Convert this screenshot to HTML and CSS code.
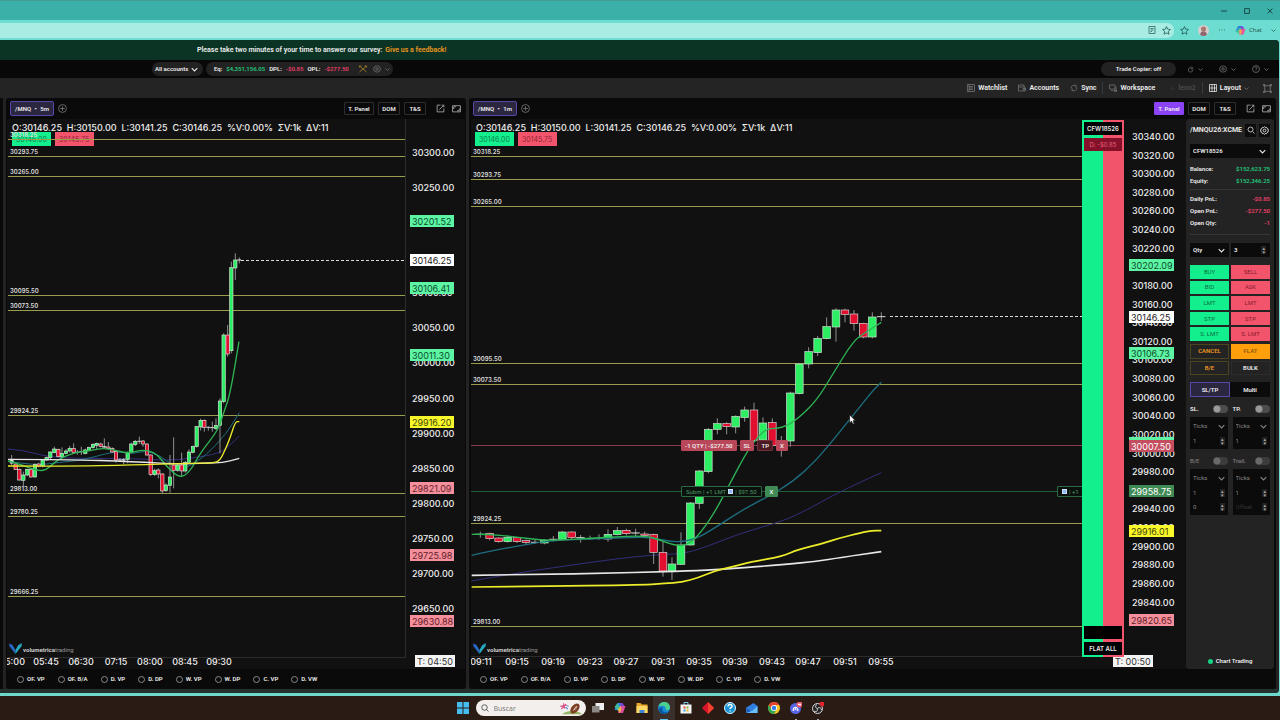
FILE: index.html
```html
<!DOCTYPE html>
<html lang="en">
<head>
<meta charset="utf-8">
<title>Volumetrica Trading</title>
<link rel="stylesheet" href="styles.css">
</head>
<body>
<svg class="defs" aria-hidden="true">
  <symbol id="chev" viewBox="0 0 10 10"><path d="M1 3l4 4 4-4"/></symbol>
  <symbol id="gear" viewBox="0 0 16 16"><path d="M8 1l1.5 1.7 2.2-.4.8 2.1 2.1.9-.4 2.2L15 8l-.8.5.4 2.2-2.1.9-.8 2.1-2.2-.4L8 15l-1.5-1.7-2.2.4-.8-2.1-2.1-.9.4-2.2L1 8l.8-.5-.4-2.2 2.1-.9.8-2.1 2.2.4z"/><circle cx="8" cy="8" r="2.5"/></symbol>
  <symbol id="plus" viewBox="0 0 16 16"><circle cx="8" cy="8" r="7"/><path d="M8 4v8M4 8h8"/></symbol>
  <symbol id="popout" viewBox="0 0 16 16"><path d="M8 2H2v12h12V8M6 10l8-8M10 2h4v4"/></symbol>
  <symbol id="full" viewBox="0 0 16 16"><path d="M1 3h14v11H1zM3 9V5h4M13 8v4H9"/></symbol>
  <symbol id="star" viewBox="0 0 16 16"><path d="M8 1l2.1 4.6 4.9.6-3.6 3.4.9 5L8 12.200l-4.300 2.400.9-5L1 6.200l4.900-.6z"/></symbol>
  <symbol id="logo" viewBox="0 0 24 20"><path d="M0 1l6 2 6 10v7L1 6z" fill="#2869c8" stroke="none"/><path d="M24 0l-7 4-5 9v7L23 6z" fill="#27a9c0" stroke="none"/></symbol>
</svg>

<header class="titlebar">
  <button class="win" aria-label="Minimize"><svg class="i6" viewBox="0 0 10 10"><path d="M0 5h10"/></svg></button>
  <button class="win" aria-label="Maximize"><svg class="i6" viewBox="0 0 10 10"><path d="M1 1h8v8H1z"/></svg></button>
  <button class="win" aria-label="Close"><svg class="i6" viewBox="0 0 10 10"><path d="M1 1l8 8M9 1l-8 8"/></svg></button>
</header>
<div class="toolbar">
  <div class="address">
    <svg class="i8" viewBox="0 0 16 16"><path d="M2 1h12v14H2zM5 5h6M5 8h6M5 11h3"/></svg>
    <svg class="i9"><use href="#star"/></svg>
  </div>
  <svg class="i9"><use href="#star"/></svg>
  <svg class="i11 plain" viewBox="0 0 22 22"><circle cx="11" cy="11" r="11" fill="#d7cfcd"/><circle cx="11" cy="8" r="5" fill="#a8776e"/><path d="M4 19c1-9 13-9 14 0-4 4-10 4-14 0z" fill="#8e6871"/></svg>
  <svg class="i8" viewBox="0 0 16 16"><path d="M2 8h2M7 8h2M12 8h2"/></svg>
  <span class="chatgroup">
    <svg class="i11 plain" viewBox="0 0 22 22"><path d="M6 2h8l-4 11H1z" fill="#2a83e0"/><path d="M14 2l3 6h-6l-4 9-6-4z" fill="#41c3a0"/><path d="M11 8h10l-4 11H8z" fill="#e3569b"/><path d="M8 11l4-3 2 6-4 6z" fill="#f5a34a"/><path d="M14 2l5 5-6 1-3-5z" fill="#7440d8"/></svg>
    <span>Chat</span>
  </span>
  <svg class="i5"><use href="#chev"/></svg>
</div>

<main class="app">
  <div class="banner"><span>Please take two minutes of your time to answer our survey:</span><a href="#">Give us a feedback!</a></div>

  <div class="statusbar">
    <button class="pill all">All accounts <svg class="i7"><use href="#chev"/></svg></button>
    <div class="pill stats">
      <span>Eq:</span><span class="up">$4,351,156.05</span>
      <span>DPL:</span><span class="down">-$0.85</span>
      <span>OPL:</span><span class="down">-$277.50</span>
      <svg class="i8 gold" viewBox="0 0 16 16"><path d="M1 2l14 12M15 2L1 14M11 2h4v3M5 2H1v3"/></svg>
      <svg class="i8 dim"><use href="#gear"/></svg>
      <svg class="i5 dim"><use href="#chev"/></svg>
    </div>
    <div class="right">
      <button class="pill copier">Trade Copier: off</button>
      <svg class="i7 dim" viewBox="0 0 16 16"><path d="M8 4a5 5 0 1 0 5 5M9 1v4M13 2l-3 5M15 6l-5 2"/></svg><svg class="i5 dim"><use href="#chev"/></svg>
      <svg class="i8 dim far"><use href="#gear"/></svg><svg class="i5 dim"><use href="#chev"/></svg>
      <svg class="i8 dim far" viewBox="0 0 16 16"><circle cx="8" cy="8" r="7"/><path d="M6 6c0-3 4-3 4 0 0 2-2 1-2 3M8 11v1"/></svg><svg class="i5 dim"><use href="#chev"/></svg>
    </div>
  </div>

  <nav class="menubar">
    <button><svg class="i8 dim" viewBox="0 0 16 16"><path d="M1 1h14v14H1zM4 5h8M4 8h8M4 11h8M4 1v14"/></svg>Watchlist</button>
    <button><svg class="i8 dim" viewBox="0 0 16 16"><path d="M1 2h11v4M1 2v12h13V6H1M10 9h5v3h-5z"/></svg>Accounts</button>
    <button><svg class="i8 dim" viewBox="0 0 16 16"><path d="M2 9a6 6 0 0 1 10-5M14 7a6 6 0 0 1-10 5M10 2l3 2-2 3M6 14l-3-2 2-3"/></svg>Sync</button>
    <i class="sep"></i>
    <button><svg class="i8 dim" viewBox="0 0 16 16"><path d="M1 2h11v8H1zM4 13h5M14 5v9M11 12h4v3h-4z"/></svg>Workspace</button>
    <button class="ghost"><svg class="i5" viewBox="0 0 10 10"><path d="M1 5h2M5 1v2M7 5h2M5 7v2"/></svg>leon2</button>
    <i class="sep"></i>
    <button><svg class="i8" viewBox="0 0 16 16"><path d="M1 1h14v14H1zM6 1v14M11 1v14M1 8h14"/></svg>Layout <svg class="i5 dim"><use href="#chev"/></svg></button>
    <button class="fs" aria-label="Full screen"><svg class="i9 dim" viewBox="0 0 16 16"><path d="M3 3h10v10H3zM1 1l3 3M15 1l-3 3M1 15l3-3M15 15l-3-3M1 4V1h3M12 1h3v3M1 12v3h3M12 15h3v-3"/></svg></button>
  </nav>

  <div class="workspace">
    <div class="stub"></div>

    <section class="panel left">
      <div class="tabs">
        <button class="tab">/MNQ <b>•</b> 5m</button>
        <button class="add" aria-label="Add tab"><svg class="i9"><use href="#plus"/></svg></button>
        <div class="tools"><button class="wide">T. Panel</button><button>DOM</button><button>T&amp;S</button>
          <svg class="i9"><use href="#popout"/></svg><svg class="i9 last"><use href="#full"/></svg></div>
      </div>
      <div class="body">
        <div class="chart">
          <svg id="chart5" class="plot" viewBox="7 119 458 550" role="img" aria-label="5 minute chart"></svg>
        </div>
      </div>
      <div class="studies"></div>
    </section>

    <section class="panel main">
      <div class="tabs">
        <button class="tab">/MNQ <b>•</b> 1m</button>
        <button class="add" aria-label="Add tab"><svg class="i9"><use href="#plus"/></svg></button>
        <div class="tools"><button class="wide on">T. Panel</button><button>DOM</button><button>T&amp;S</button>
          <svg class="i9"><use href="#popout"/></svg><svg class="i9 last"><use href="#full"/></svg></div>
      </div>
      <div class="body">
        <div class="chart">
          <svg id="chart1" class="plot" viewBox="471 119 715 550" role="img" aria-label="1 minute chart"></svg>
          <div class="order position"><span class="tag">-1 QTY | -$277.50</span><button>SL</button><button class="tp">TP</button><button>X</button></div>
          <div class="order limit"><span class="tag">Subm | +1 LMT <i class="sq"></i> | $97.50</span><button>X</button></div>
          <div class="order edge"><span class="tag"><i class="sq"></i> | +1</span></div>
          <div class="ladder">
            <span class="acct">CFW18526</span><span class="day">D: -$0.85</span>
            <span class="blank"></span><button>FLAT ALL</button>
          </div>
          <svg class="cursor" viewBox="0 0 12 18"><path d="M1 1v14l3-3 3 5 2-1-2-5h4z" fill="#fff" stroke="#222"/></svg>
        </div>

        <aside class="trade">
          <div class="symbol"><strong>/MNQU26:XCME</strong>
            <button aria-label="Search"><svg class="i8" viewBox="0 0 16 16"><circle cx="7" cy="7" r="5"/><path d="M11 11l4 4"/></svg></button>
            <button aria-label="Settings"><svg class="i9"><use href="#gear"/></svg></button></div>
          <div class="pick account"><select aria-label="Account"><option>CFW18526</option></select><svg class="i7"><use href="#chev"/></svg></div>
          <dl><dt>Balance:</dt><dd class="up">$152,623.75</dd><dt>Equity:</dt><dd class="up">$152,346.25</dd></dl>
          <dl class="pnl"><dt>Daily PnL:</dt><dd class="down">-$0.85</dd><dt>Open PnL:</dt><dd class="down">-$277.50</dd><dt>Open Qty:</dt><dd class="down">-1</dd></dl>
          <div class="qty">
            <div class="pick"><select aria-label="Quantity type"><option>Qty</option></select><svg class="i7"><use href="#chev"/></svg></div>
            <div class="pick"><input type="text" value="3" aria-label="Quantity"><i class="spin">▴<br>▾</i></div>
          </div>
          <div class="grid">
            <button class="buy">BUY</button><button class="sell">SELL</button>
            <button class="buy">BID</button><button class="sell">ASK</button>
            <button class="buy">LMT</button><button class="sell">LMT</button>
            <button class="buy">STP</button><button class="sell">STP</button>
            <button class="buy">S. LMT</button><button class="sell">S. LMT</button>
          </div>
          <div class="grid acts">
            <button class="cancel">CANCEL</button><button class="flat">FLAT</button>
            <button class="cancel">B/E</button><button class="bulk">BULK</button>
          </div>
          <div class="grid modes"><button class="sel">SL/TP</button><button>Multi</button></div>
          <div class="brackets">
            <label>SL.<input type="checkbox"></label><label>TP.<input type="checkbox"></label>
            <div class="box"><div class="pick"><select aria-label="SL unit"><option>Ticks</option></select><svg class="i7"><use href="#chev"/></svg></div><div class="pick"><input type="text" value="1" aria-label="SL value"><i class="spin">▴<br>▾</i></div></div>
            <div class="box"><div class="pick"><select aria-label="TP unit"><option>Ticks</option></select><svg class="i7"><use href="#chev"/></svg></div><div class="pick"><input type="text" value="1" aria-label="TP value"><i class="spin">▴<br>▾</i></div></div>
          </div>
          <div class="brackets off">
            <label>B/E<input type="checkbox"></label><label>Trail.<input type="checkbox"></label>
            <div class="box"><div class="pick"><select aria-label="B/E unit"><option>Ticks</option></select><svg class="i7"><use href="#chev"/></svg></div><div class="pick"><input type="text" value="1" aria-label="B/E value"><i class="spin">▴<br>▾</i></div><div class="pick"><input type="text" value="0" aria-label="B/E offset"><i class="spin">▴<br>▾</i></div></div>
            <div class="box"><div class="pick"><select aria-label="Trail unit"><option>Ticks</option></select><svg class="i7"><use href="#chev"/></svg></div><div class="pick"><input type="text" value="1" aria-label="Trail value"><i class="spin">▴<br>▾</i></div><div class="pick"><input type="text" placeholder="Offset" aria-label="Trail offset"><i class="spin">▴<br>▾</i></div></div>
          </div>
          <div class="status"><i></i>Chart Trading</div>
        </aside>
      </div>
      <div class="studies"></div>
    </section>
  </div>
  <div class="rim"></div>
</main>

<footer class="taskbar">
  <button class="app-icon" aria-label="Start"><svg viewBox="0 0 24 24"><path d="M0 0h11v11H0zM13 0h11v11H13zM0 13h11v11H0zM13 13h11v11H13z" fill="#45bdf0"/></svg></button>
  <label class="search"><svg class="i8" viewBox="0 0 16 16"><circle cx="7" cy="7" r="5.500"/><path d="M11 11l4 4"/></svg><input type="text" placeholder="Buscar" aria-label="Buscar">
    <svg class="ball" viewBox="0 0 66 36"><path d="M8 34c14-12 44-12 56 0z" fill="#93b565"/><path d="M12 4l4 14M3 12l18-3M6 20l13-14" stroke="#d84c87" stroke-width="3"/><path d="M18 14l6 6M22 10l4 2" stroke="#3b7bd8" stroke-width="3"/><ellipse cx="44" cy="18" rx="16" ry="10" transform="rotate(-50 44 18)" fill="#7d3f24"/><path d="M39 24l11-13M41 18l4 3M45 14l4 3" stroke="#fff" stroke-width="2"/></svg></label>
  <button class="app-icon" aria-label="Task view"><svg viewBox="0 0 24 24"><path d="M7 2h17v14H7z" fill="#eee"/><path d="M0 8h15v13H0z" fill="#8b8886"/></svg></button>
  <button class="app-icon" aria-label="Copilot"><svg viewBox="0 0 24 24"><path d="M7 2h9l-5 14H1z" fill="#2d85e6"/><path d="M1 10l6-8 5 8-3 9z" fill="#43b8a0"/><path d="M12 8h11l-5 14H8z" fill="#df4f9f"/><path d="M8 15l5-7 2 7-4 7z" fill="#f6b443"/><path d="M12 2h5l4 6h-7z" fill="#7544d7"/></svg></button>
  <button class="app-icon" aria-label="Files"><svg viewBox="0 0 24 24"><path d="M1 2h8l3 3h11v17H1z" fill="#e8a92b"/><path d="M1 8h22v14H1z" fill="#ffd766"/><path d="M7 16h10v6H7z" fill="#3a86d2"/></svg></button>
  <button class="app-icon active" aria-label="Edge"><svg viewBox="0 0 24 24"><circle cx="12" cy="12" r="12" fill="#1688d4"/><path d="M1 9C4-3 23-3 24 11c0 6-7 6-9 4 3-5-4-10-14-6z" fill="#4bd08d"/><path d="M10 11c-5 5 0 12 10 9-8 8-21 1-17-8z" fill="#0c519e"/></svg></button>
  <button class="app-icon" aria-label="Store"><svg viewBox="0 0 24 24"><path d="M8 6V1h8v5" fill="none" stroke="#7cc4f0" stroke-width="2"/><path d="M1 5h22v18H1z" fill="#f4f4f4"/><path d="M7 9h4v4H7z" fill="#e5502c"/><path d="M13 9h4v4h-4z" fill="#7db738"/><path d="M7 15h4v4H7z" fill="#2a9ee4"/><path d="M13 15h4v4h-4z" fill="#f2b51d"/></svg></button>
  <button class="app-icon" aria-label="Anydesk"><svg viewBox="0 0 24 24"><path d="M12 0l12 12-12 12L0 12z" fill="#d9152a"/><path d="M12 0l12 12-12 12z" fill="#f0422d"/></svg></button>
  <button class="app-icon" aria-label="Help"><svg viewBox="0 0 24 24"><circle cx="12" cy="12" r="11" fill="#1893d6" stroke="#dff3ff" stroke-width="2"/><path d="M8 9c0-6 9-5 8 0-1 3-4 2-4 5M12 17v2" fill="none" stroke="#fff" stroke-width="3"/></svg></button>
  <button class="app-icon" aria-label="Mail"><svg viewBox="0 0 24 24"><path d="M1 11L15 2l8 6v14H1z" fill="#2e7fe0"/><path d="M1 11l11 7 11-10v14H1z" fill="#67bff5"/><path d="M1 11l10 7L1 22z" fill="#1a5dc0"/></svg></button>
  <button class="app-icon" aria-label="Chrome"><svg viewBox="0 0 24 24"><circle cx="12" cy="12" r="12" fill="#f8c822"/><path d="M1.600 6a12 12 0 0 1 20.800 0H12l-5 9z" fill="#e6402f"/><path d="M1.600 6A12 12 0 0 0 12 24l5-9H7z" fill="#34a551"/><circle cx="12" cy="12" r="6" fill="#fff"/><circle cx="12" cy="12" r="4.500" fill="#397de8"/></svg></button>
  <button class="app-icon run" aria-label="Discord"><svg viewBox="0 0 24 24"><circle cx="11" cy="13" r="11" fill="#5766e8"/><path d="M5 17c0-10 12-10 12 0l-3 1-1-2H9l-1 2z" fill="#fff"/><circle cx="9" cy="14" r="1.500" fill="#5766e8"/><circle cx="13" cy="14" r="1.500" fill="#5766e8"/><circle cx="19" cy="5" r="6" fill="#e85a6a"/><path d="M16 5h6" stroke="#fff" stroke-width="3"/></svg></button>
  <button class="app-icon run" aria-label="OBS"><svg viewBox="0 0 24 24"><circle cx="11" cy="13" r="10" fill="#262427" stroke="#ddd" stroke-width="2"/><path d="M11 13c-5-1-5-6-1-8M11 13c3-4 8-1 8 3M11 13c1 5-3 8-7 5" fill="none" stroke="#ddd" stroke-width="2"/><circle cx="20" cy="4" r="5" fill="#e5222b"/></svg></button>
</footer>
<script src="chart.js"></script>
</body>
</html>
```
FILE: styles.css
```css
* { box-sizing: border-box; }
body { margin: 0; min-height: 100vh; display: flex; flex-direction: column; background: #6cd9cc; color: #eee; font: 600 6px/8px Roboto, sans-serif; }
button, input, select { font: inherit; color: inherit; margin: 0; padding: 0; border: 0; background: none; border-radius: 0; white-space: nowrap; }
select { appearance: none; width: 100%; }
input[type=text] { width: 100%; min-width: 0; outline: 0; }
svg { fill: none; stroke: currentColor; stroke-width: 1.500; flex: none; display: block; }
.plain { stroke: none; }
.defs { display: none; }
.i5 { width: 5px; height: 5px; }
.i6 { width: 6px; height: 6px; }
.i7 { width: 7px; height: 7px; }
.i8 { width: 8px; height: 8px; }
.i9 { width: 9px; height: 9px; }
.i11 { width: 11px; height: 11px; }
.dim { color: #777; }
.up { color: #24c77c; }
.down { color: #ea3f68; }

.titlebar { height: 20px; flex: none; display: flex; justify-content: flex-end; align-items: center; gap: 17px; padding-right: 7px; background: #3bb0a8; border-top: 1px solid #459b91; color: #143f3c; }
.toolbar { height: 20px; flex: none; display: flex; align-items: center; gap: 9px; padding-right: 4px; background: #6cddd0; color: #265d58; }
.address { flex: 1; height: 15px; display: flex; justify-content: flex-end; align-items: center; gap: 6px; padding-right: 3px; margin-right: -3px; border-radius: 0 7px 7px 0; background: #a9ece4; }
.chatgroup { display: flex; align-items: center; gap: 3px; font: 400 6px/9px "Open Sans", sans-serif; color: #204a47; }

.app { flex: 1; display: flex; flex-direction: column; margin-right: 1px; background: #232323; border-radius: 0 4px 4px 0; overflow: hidden; }
.banner { height: 20px; display: flex; align-items: center; gap: 3px; padding-left: 197px; font-size: 7px; background: #0c3425; }
.banner a { color: #ef9a20; text-decoration: none; }
.statusbar { height: 18px; display: flex; align-items: center; gap: 3px; padding: 0 10px 0 152px; background: #080808; }
.pill { height: 14px; display: flex; align-items: center; border-radius: 7px; background: #222; }
.all { width: 51px; justify-content: space-between; padding: 0 5px 0 3px; }
.stats { width: 187px; gap: 4px; padding: 0 10px 0 8px; }
.gold { color: #b8892c; margin: 0 2px 0 6px; }
.statusbar .right { margin-left: auto; display: flex; align-items: center; gap: 4px; }
.copier { width: 75px; justify-content: center; margin-right: 7px; }
.far { margin-left: 12px; }
.menubar { height: 20px; display: flex; justify-content: flex-end; align-items: center; gap: 11px; padding-right: 7px; font-size: 7px; background: #242424; }
.menubar button { display: flex; align-items: center; gap: 3px; }
.sep { width: 1px; height: 12px; margin: 0 -5px; background: #3a3a3a; }
.ghost { color: #4c4c4c; margin-left: 4px; }
.fs { margin-left: 3px; }

.workspace { flex: 1; display: flex; padding: 0 3px 0 0; gap: 3px; }
.stub { width: 3px; background: #0a0a0a; }
.panel { display: flex; flex-direction: column; background: #0a0a0a; border-radius: 3px; min-width: 0; }
.left { flex: 460 1 0; }
.main { flex: 807 1 0; }
.tabs { height: 21px; display: flex; align-items: center; padding: 0 5px 0 4px; gap: 4px; }
.tab { width: 44px; height: 15px; border: 1px solid #5a46a8; border-radius: 2px; background: #2b2740; }
.tab b { margin: 0 2px; }
.add { color: #777; }
.tools { margin-left: auto; display: flex; align-items: center; gap: 4px; }
.tools button { width: 22px; height: 13px; border: 1px solid #2d2d2d; border-radius: 1px; }
.tools .wide { width: 30px; }
.tools .on { background: #8b43f5; border-color: #8b43f5; }
.tools svg { color: #aaa; margin-left: 6px; }
.tools .last { margin-left: 3px; }
.body { flex: 1; display: flex; padding: 0 1px; }
.main .body { padding: 0 2px; }
.chart { flex: 1; position: relative; min-width: 0; background: #111; }
.plot { width: 100%; height: auto; stroke: none; font-family: Inter, sans-serif; }
.plot text, .plot tspan { dominant-baseline: central; }
.plot .tick { font-size: 9px; font-weight: 500; fill: #eee; }
.plot .mark { font-size: 9px; font-weight: 400; }
.plot .small { font-size: 7px; font-weight: 400; }
.plot .level { font-size: 6px; font-weight: 600; fill: #ddd; }
.plot .brand { font-family: Roboto, sans-serif; font-size: 6px; font-weight: 700; fill: #ccc; }
.plot .brand tspan { font-weight: 400; fill: #999; }
.studies { height: 20px; display: flex; align-items: center; gap: 13px; padding-left: 11px; }
.studies label { display: flex; align-items: center; gap: 3px; }
.studies input { appearance: none; width: 7px; height: 7px; border: 1px solid #888; border-radius: 50%; }

.order { position: absolute; left: 210px; display: flex; gap: 3px; }
.order .tag, .order button { height: 11px; padding: 0 3px; line-height: 9px; border: 1px solid #b8475a; background: #b8475a; border-radius: 1px; }
.order .tag { display: flex; align-items: center; gap: 2px; white-space: nowrap; }
.position { top: 321px; }
.position .tp { background: #4c1a22; border-color: #70303b; }
.limit { top: 367px; }
.limit .tag, .edge .tag { padding: 0 4px; font-weight: 400; background: #0b120e; border-color: #2c6a41; color: #4d9865; }
.limit button { background: #3f8a55; border-color: #3f8a55; padding: 0 4px; }
.edge { top: 367px; left: 586px; width: 25px; }
.edge .tag { flex: 1; }
.sq { width: 5px; height: 5px; background: #8fb7f5; border: 1px solid #cfe0fb; }
.ladder { position: absolute; left: 611px; top: 1px; width: 42px; height: 537px; display: flex; flex-direction: column; gap: 3px; padding: 2px; background: linear-gradient(90deg, #14ef8d 50%, #f2556b 50%); }
.ladder > * { height: 13px; flex: none; display: flex; align-items: center; justify-content: center; background: #000; font-family: Inter, sans-serif; }
.ladder .day { background: #85102a; color: #e5677c; font-weight: 400; }
.ladder .blank { margin-top: auto; }
.cursor { position: absolute; left: 378px; top: 295px; width: 7px; height: 11px; }

.trade { width: 88px; flex: none; display: flex; flex-direction: column; padding: 4px; border-radius: 3px; background: #232323; }
.symbol { height: 14px; display: flex; align-items: center; gap: 3px; font-size: 7px; }
.symbol strong { flex: 1; font-weight: 600; white-space: nowrap; }
.symbol button { width: 13px; height: 13px; display: grid; place-items: center; background: #0c0c0c; }
.pick { display: flex; align-items: center; height: 14px; padding: 0 4px 0 3px; background: #0b0b0b; }
.account { margin: 7px 0 5px; }
dl { display: grid; grid-template-columns: auto auto; grid-auto-rows: 12px; align-items: center; margin: 0; height: 27px; border-bottom: 1px solid #353535; }
dd { margin: 0; text-align: right; }
.pnl { height: 45px; padding-top: 3px; }
.qty { display: grid; grid-template-columns: 1fr 1fr; gap: 2px; margin: 8px 0; }
.spin { flex: none; font: 400 5px/4px "DejaVu Sans", sans-serif; color: #aaa; background: #222; padding: 0 1px; }
.grid { display: grid; grid-template-columns: 1fr 1fr; grid-auto-rows: 1fr; gap: 2px; height: 76px; }
.buy { background: #14ef8d; color: #0b6a42; font-weight: 400; }
.sell { background: #f2556b; color: #8a1b2d; font-weight: 400; }
.acts { height: 31px; margin: 3px 0 7px; }
.cancel { border: 1px solid #4d431c; color: #ef9a20; }
.flat { background: #ff9f0c; color: #8b5a10; }
.bulk { border: 1px solid #2c2c2c; }
.modes { height: 15px; gap: 0; }
.modes button { background: #0b0b0b; }
.modes .sel { border: 1px solid #5a46a8; background: #2b2740; }
.brackets { display: grid; grid-template-columns: 1fr 1fr; gap: 4px 5px; margin-top: 7px; }
.brackets label { height: 9px; display: flex; align-items: center; justify-content: space-between; }
.brackets input[type=checkbox] { appearance: none; width: 15px; height: 8px; border-radius: 4px; background: radial-gradient(circle at 4px 4px, #999 3px, #4c4c4c 4px); }
.box { background: #0b0b0b; padding: 1px 0; color: #888; font-weight: 400; }
.box .pick { height: 16px; padding: 0 3px; background: none; }
.box .pick + .pick { height: 14px; }
.off label { color: #777; }
.off input[type=checkbox] { opacity: .6; }
.box ::placeholder { color: #333; opacity: 1; }
.status { margin-top: auto; display: flex; align-items: center; justify-content: center; gap: 3px; }
.status i { width: 5px; height: 5px; border-radius: 50%; background: #14d484; }
.rim { height: 4px; background: #23302d; }

.taskbar { height: 24px; margin-top: 3px; flex: none; display: flex; justify-content: center; align-items: center; background: #2b1b15; }
.app-icon { width: 22px; height: 24px; position: relative; display: grid; place-items: center; }
.app-icon svg { width: 12px; height: 12px; stroke: none; }
.active { background: #3a2f2b; }
.active::after, .run::after { content: ""; position: absolute; bottom: 0; left: 7px; width: 8px; height: 1px; background: #62c2f2; }
.run::after { left: 10px; width: 2px; background: #aaa; }
.search { width: 110px; height: 16px; display: flex; align-items: center; gap: 5px; padding: 0 3px 0 5px; margin: 0 1px 0 2px; border-radius: 8px; background: #f3efec; color: #333; font: 400 7px/9px "Open Sans", sans-serif; }
.search input { flex: 1; }
.ball { width: 24px; height: 13px; stroke: none; }
```
FILE: chart.js
```javascript
const UP = '#2bee62', DOWN = '#e20f31';

// Candles: [centre x, wick top, body top, body bottom, wick bottom, kind], in thirds of a unit
const five = { ox: 0, oy: 400, w: 10, rows: [
  [35,165,180,190,195,'d'],[47,190,192,208,210,'r'],[58,206,208,240,242,'r'],[70,215,225,241,262,'g'],[82,206,208,225,228,'g'],
  [93,207,208,231,233,'r'],[105,190,193,231,233,'g'],[116,188,192,198,202,'r'],[128,178,180,198,202,'g'],[140,170,173,180,183,'g'],
  [151,154,156,173,178,'g'],[163,140,147,158,160,'g'],[175,146,148,170,172,'r'],[186,142,160,171,174,'g'],[198,148,153,160,163,'g'],
  [209,138,145,153,158,'g'],[221,130,146,157,160,'r'],[232,150,156,158,164,'d'],[244,140,154,156,165,'d'],[256,146,150,160,163,'g'],
  [267,140,143,151,154,'g'],[279,130,133,143,146,'g'],[290,128,130,136,150,'g'],[302,128,132,139,142,'r'],[313,115,139,142,145,'d'],
  [325,126,141,146,150,'r'],[337,142,146,156,158,'r'],[348,150,155,180,188,'r'],[360,174,179,181,186,'d'],[371,174,178,181,193,'d'],
  [383,155,158,178,190,'g'],[394,128,132,158,160,'g'],[406,120,124,134,138,'g'],[418,110,123,125,132,'d'],[429,120,123,132,140,'r'],
  [441,130,132,165,167,'r'],[452,163,165,224,228,'r'],[464,206,212,224,228,'g'],[475,205,210,222,235,'r'],[487,220,222,273,280,'r'],
  [498,250,255,272,276,'g'],[510,165,231,256,278,'g'],[521,112,195,211,265,'r'],[533,190,195,211,215,'g'],[545,158,195,213,230,'r'],
  [556,183,187,213,218,'g'],[567,148,156,187,190,'g'],[579,137,139,157,160,'g'],[590,78,80,139,143,'g'],[602,56,61,81,92,'g'],
  [613,58,61,82,95,'r'],[625,79,81,83,92,'d'],[637,65,82,84,95,'d'],[648,55,76,86,90,'g'],[660,-5,3,76,160,'g'],
  [671,-200,-195,5,10,'g'],[683,-225,-195,-138,-130,'r'],[694,-415,-397,-148,-140,'g'],[706,-440,-420,-396,-360,'g'],[718,-428,-421,-419,-410,'d']
]};
const oneA = { ox: 465, oy: 480, w: 23, rows: [
  [46,155,162,164,173,'d'],[74,158,160,176,181,'r'],[101,172,174,185,188,'r'],[128,168,172,185,188,'g'],[156,170,173,185,189,'r'],
  [183,178,182,187,195,'r'],[210,178,186,188,192,'d'],[238,178,181,189,193,'g'],[265,168,177,179,184,'d'],[292,153,156,178,180,'g'],
  [320,154,156,173,180,'r'],[347,165,172,174,188,'d'],[375,167,175,177,180,'d'],[402,163,174,176,180,'d'],[429,148,163,177,185,'g'],
  [457,141,152,164,166,'g'],[484,146,151,161,166,'r'],[512,146,158,160,170,'d'],[539,155,162,166,170,'r'],[566,161,164,217,252,'r'],
  [594,185,217,273,290,'r'],[621,232,252,273,300,'g'],[648,157,195,253,255,'g'],[676,66,69,195,197,'g']
]};
const oneB = { ox: 640, oy: 290, w: 23, rows: [
  [178,540,543,640,657,'g'],[205,414,418,545,550,'g'],[232,385,401,418,433,'g'],[260,397,401,410,433,'r'],[287,376,379,411,430,'g'],
  [314,350,360,383,395,'g'],[342,338,360,452,455,'r'],[369,382,399,450,455,'g'],[397,385,398,467,470,'r'],[424,438,466,468,500,'d'],
  [451,305,309,453,470,'g'],[478,219,222,311,313,'g'],[506,172,185,222,235,'g'],[533,138,145,188,198,'g'],[560,82,110,146,148,'g'],
  [588,55,60,111,155,'g'],[615,56,60,73,97,'r'],[642,60,72,101,122,'r'],[670,98,100,141,145,'r'],[697,67,81,141,145,'g'],[724,67,79,81,93,'d']
]};

const line = (x1, y1, x2, y2, c, w = 1, extra = '') =>
  `<line x1="${x1}" y1="${y1}" x2="${x2}" y2="${y2}" stroke="${c}" stroke-width="${w}" ${extra}/>`;
const text = (x, y, s, cls, extra = '') => `<text x="${x}" y="${y}" class="${cls}" ${extra}>${s}</text>`;
const chip = (x, y, w, h, s, bg, fg) =>
  `<rect x="${x}" y="${y - h / 2}" width="${w}" height="${h}" fill="${bg}"/>` + (s ? text(x + 2, y, s, 'mark', `fill="${fg}"`) : '');

function candles(set) {
  return `<g transform="translate(${set.ox} ${set.oy}) scale(.3333)">` + set.rows.map(([x, wt, t, b, wb, k]) => {
    const fill = k === 'g' ? UP : k === 'r' ? DOWN : '#ddd';
    return line(x, wt, x, wb, '#aaa', 2.500) +
      `<rect x="${x - set.w / 2}" y="${t}" width="${set.w}" height="${b - t}" fill="${fill}" stroke="#d5ded5" stroke-width="${k === 'd' ? 1 : 2}"/>`;
  }).join('') + '</g>';
}
function curve(ox, oy, color, width, pts) {
  let d = `M${pts[0]}`;
  for (let i = 1; i < pts.length - 1; i++) {
    const [a, b] = pts[i], [c, e] = pts[i + 1];
    d += `Q${a} ${b} ${(a + c) / 2} ${(b + e) / 2}`;
  }
  d += `L${pts[pts.length - 1]}`;
  return `<path d="${d}" transform="translate(${ox} ${oy}) scale(.3333)" fill="none" stroke="${color}" stroke-width="${width}"/>`;
}
const ohlc = 'O:30146.25&#160; H:30150.00&#160; L:30141.25&#160; C:30146.25&#160; %V:0.00%&#160; ΣV:1k&#160; ΔV:11';
const GREEN = '#2fb455', TEAL = '#1d6e80', NAVY = '#322f7a', YEL = '#ecec2a', LEVEL = '#9a9c4e';

function bidAsk(x) {
  return chip(x, 139, 39, 14, '', '#14ef8d') + chip(x + 43, 139, 39, 14, '', '#f2556b') +
    text(x + 4, 139, '30146.00', 'small', 'fill="#0b7f4c"') + text(x + 47, 139, '30145.75', 'small', 'fill="#922639"');
}

function left() {
  let s = '';
  s += line(405.5, 119, 405.5, 657, '#2c2c2c') + line(8, 657.5, 406, 657.5, '#2c2c2c');
  s += bidAsk(12);
  [[139.5,'30318.25'],[156.5,'30293.75'],[176.5,'30265.00'],[295.5,'30095.50'],[310.5,'30073.50'],[415.5,'29924.25'],[493.5,'29813.00'],[516.5,'29780.25'],[596.5,'29666.25']]
    .forEach(([y, t]) => { s += line(8, y, 405, y, LEVEL) + text(10, y - 5, t, 'level'); });
  s += curve(0, 400, NAVY, 3, [[24,147],[70,150],[150,173],[300,176],[420,176],[500,182],[580,174],[660,160],[690,135],[718,108]]);
  s += curve(0, 400, TEAL, 3, [[24,183],[100,197],[180,187],[250,180],[320,160],[360,155],[400,162],[430,152],[480,165],[520,200],[560,205],[620,165],[680,100],[718,38]]);
  s += candles(five);
  s += curve(0, 400, GREEN, 4, [[24,183],[60,193],[100,208],[135,214],[170,180],[220,158],[270,152],[310,144],[350,152],[385,160],[430,148],[470,160],[500,200],[540,235],[570,215],[600,160],[655,90],[670,40],[690,-15],[717,-175]]);
  s += curve(0, 400, '#e8e8e8', 4, [[24,178],[200,178],[400,185],[540,192],[600,190],[660,188],[690,183],[718,175]]);
  s += curve(0, 400, YEL, 4, [[24,198],[200,199],[400,195],[560,190],[640,189],[660,182],[675,150],[690,115],[706,65],[718,65]]);
  s += line(241, 260.5, 405, 260.5, '#ddd', 1, 'stroke-dasharray="3 2"');
  [[152,'30300.00'],[187,'30250.00'],[292,'30100.00'],[327,'30050.00'],[362,'30000.00'],[398,'29950.00'],[433,'29900.00'],[468,'29850.00'],[503,'29800.00'],[538,'29750.00'],[573,'29700.00'],[608,'29650.00']]
    .forEach(([y, t]) => { s += text(412, y, t, 'tick'); });
  [[221,'30201.52','#5df5a4','#0c4c2c'],[260,'30146.25','#fff','#222'],[288,'30106.41','#5df5a4','#0c4c2c'],[355,'30011.30','#5df5a4','#0c4c2c'],[422,'29916.20','#f8f82a','#444408'],[488,'29821.09','#f58f9c','#641d29'],[555,'29725.98','#f58f9c','#641d29'],[621,'29630.88','#f58f9c','#641d29']]
    .forEach(([y, t, b, f]) => { s += chip(410, y, 44, 12, t, b, f); });
  s += `<use href="#logo" x="9" y="643" width="13" height="11"/>` + text(23, 649, 'volumetrica<tspan>trading</tspan>', 'brand');
  [['5:00',15],['05:45',46],['06:30',81],['07:15',116],['08:00',150],['08:45',185],['09:30',219]]
    .forEach(([t, x]) => { s += text(x, 661, t, 'tick', 'text-anchor="middle"'); });
  s += chip(415, 661, 40, 12, 'T: 04:50', '#f4f4f4', '#333');
  s += text(12, 127, ohlc, 'tick');
  document.getElementById('chart5').innerHTML = s;
}

function right() {
  let s = line(471, 656.5, 1082, 656.5, '#2c2c2c');
  s += bidAsk(475);
  [[156.5,'30318.25'],[179.5,'30293.75'],[206.5,'30265.00'],[363.5,'30095.50'],[384.5,'30073.50'],[523.5,'29924.25'],[626.5,'29813.00']]
    .forEach(([y, t]) => { s += line(471, y, 1082, y, LEVEL) + text(473, y - 5, t, 'level'); });
  s += line(471, 445.5, 1082, 445.5, '#8c3b4c') + line(471, 491.5, 1082, 491.5, '#235f3a');
  s += curve(465, 480, NAVY, 3, [[20,303],[150,280],[300,258],[450,237],[560,225],[640,222],[700,210],[830,158],[950,125],[1030,88],[1100,48],[1200,0],[1249,-22]]);
  s += candles(oneB) + candles(oneA);
  s += curve(465, 480, TEAL, 4, [[20,226],[80,212],[150,200],[250,182],[400,176],[500,172],[560,172],[630,188],[690,178],[740,150],[840,85],[900,55],[985,5],[1055,-60],[1125,-145],[1185,-220],[1225,-270],[1249,-293]]);
  s += curve(465, 480, GREEN, 4, [[20,163],[60,162],[150,170],[230,181],[290,180],[350,176],[430,172],[540,166],[590,182],[630,197],[670,195],[710,155],[755,87],[795,10],[843,-80],[875,-125],[905,-155],[950,-155],[995,-180],[1055,-238],[1105,-320],[1165,-418],[1205,-445],[1249,-473]]);
  s += curve(465, 480, '#e8e8e8', 5, [[20,286],[200,284],[450,279],[560,276],[700,272],[800,266],[950,254],[1050,245],[1130,232],[1249,215]]);
  s += curve(465, 480, YEL, 5, [[20,321],[200,319],[540,315],[600,310],[650,307],[700,293],[750,272],[800,261],[860,245],[950,230],[1000,208],[1070,192],[1120,175],[1190,158],[1220,152],[1249,152]]);
  s += line(890, 316.5, 1082, 316.5, '#ddd', 1, 'stroke-dasharray="3 2"');
  [340,320,300,280,260,240,220,180,160,140,120,100,80,60,40,20,0,-20,-60,-80,-100,-120,-140,-160].forEach(v => {
    s += text(1132, Math.round(136 + (340 - v) * .931), (30000 + v) + '.00', 'tick');
  });
  [[265,'30202.09','#5df5a4','#0c4c2c'],[317,'30146.25','#fff','#222'],[353,'30106.73','#5df5a4','#0c4c2c'],[440,'','#5df5a4','#000'],[446,'30007.50','#c44d5f','#fff'],[491,'29958.75','#3f8a55','#fff'],[531,'29916.01','#f8f82a','#444408'],[620,'29820.65','#f58f9c','#641d29']]
    .forEach(([y, t, b, f]) => { s += chip(1129, y, 45, y === 440 ? 6 : 12, t, b, f); });
  s += `<use href="#logo" x="473" y="643" width="13" height="11"/>` + text(487, 649, 'volumetrica<tspan>trading</tspan>', 'brand');
  [['09:11',481],['09:15',517],['09:19',553],['09:23',590],['09:27',626],['09:31',663],['09:35',699],['09:39',735],['09:43',772],['09:47',808],['09:51',845],['09:55',881]]
    .forEach(([t, x]) => { s += text(x, 661, t, 'tick', 'text-anchor="middle"'); });
  s += chip(1113, 661, 40, 12, 'T: 00:50', '#f4f4f4', '#333');
  s += text(476, 127, ohlc, 'tick');
  document.getElementById('chart1').innerHTML = s;
}
left();
right();

document.querySelectorAll('.studies').forEach(row => {
  row.innerHTML = ['OF. VP','OF. B/A','D. VP','D. DP','W. VP','W. DP','C. VP','D. VW']
    .map(n => `<label><input type="checkbox">${n}</label>`).join('');
});
```
